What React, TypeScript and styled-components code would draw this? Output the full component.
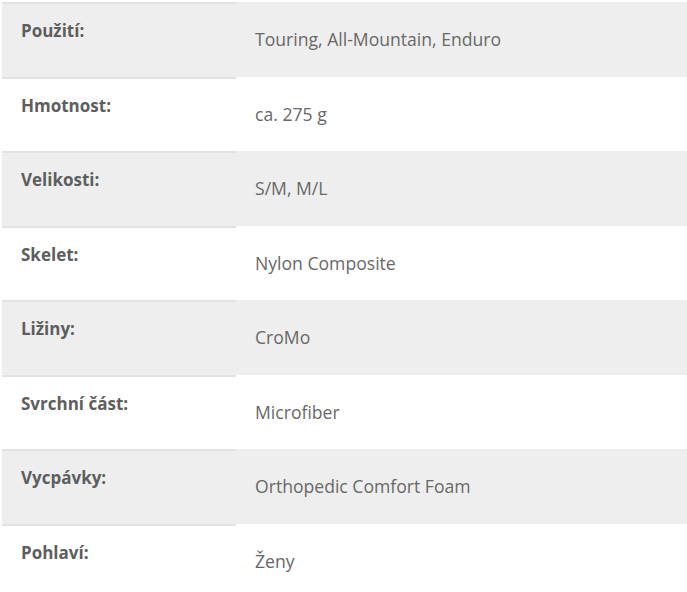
import React from "react";
import styled, { createGlobalStyle } from "styled-components";

const Global = createGlobalStyle`
  html, body { margin: 0; padding: 0; background: #ffffff; }
  body { font-family: "Open Sans", Lato, sans-serif; }
`;

const Table = styled.div`
  display: flex;
  flex-direction: column;
  padding: 2px 0 0 2px;
`;

const Row = styled.div<{ $shaded: boolean }>`
  display: grid;
  grid-template-columns: 234px 1fr;
  height: 74.5px;
  background: ${(p) => (p.$shaded ? "#eeeeee" : "#ffffff")};
`;

const Label = styled.div`
  border-top: 2px solid #e2e2e2;
  padding: 16px 0 0 19px;
  font-size: 17px;
  font-weight: 700;
  color: #5e5e5e;
  line-height: 22px;
`;

const Value = styled.div`
  display: flex;
  align-items: center;
  padding: 0 0 0 19px;
  font-size: 17.6px;
  color: #686868;
  line-height: 22px;
`;

const rows: [string, string][] = [
  ["Použití:", "Touring, All-Mountain, Enduro"],
  ["Hmotnost:", "ca. 275 g"],
  ["Velikosti:", "S/M, M/L"],
  ["Skelet:", "Nylon Composite"],
  ["Ližiny:", "CroMo"],
  ["Svrchní část:", "Microfiber"],
  ["Vycpávky:", "Orthopedic Comfort Foam"],
  ["Pohlaví:", "Ženy"],
];

export default function App() {
  return (
    <>
      <Global />
      <Table>
        {rows.map(([k, v], i) => (
          <Row key={k} $shaded={i % 2 === 0}>
            <Label>{k}</Label>
            <Value>{v}</Value>
          </Row>
        ))}
      </Table>
    </>
  );
}
